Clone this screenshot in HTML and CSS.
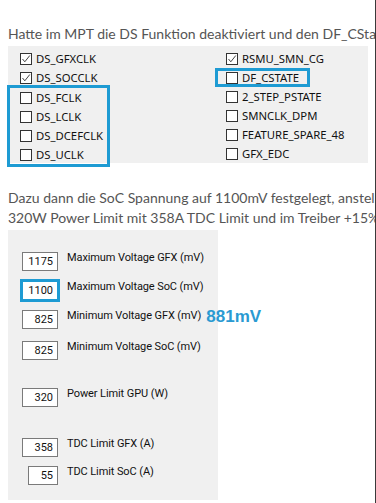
FILE: index.html
```html
<!DOCTYPE html>
<html lang="de">
<head>
  <meta charset="UTF-8" />
  <meta name="viewport" content="width=device-width, initial-scale=1.0"/>
  <title>MPT Einstellungen</title>
  <link rel="stylesheet" href="styles.css">
</head>
<body>
  <div class="page">
    <p class="text first">Hatte im MPT die DS Funktion deaktiviert und den DF_CState</p>

    <div class="panel flags">
      <div class="col">
        <label class="flag"><span class="cb on"><svg viewBox="0 0 10 10"><polyline points="1.5,5 3.8,7.8 8.8,1.5"/></svg></span>DS_GFXCLK</label>
        <label class="flag"><span class="cb on"><svg viewBox="0 0 10 10"><polyline points="1.5,5 3.8,7.8 8.8,1.5"/></svg></span>DS_SOCCLK</label>
        <div class="mark mark-left">
          <label class="flag"><span class="cb"></span>DS_FCLK</label>
          <label class="flag"><span class="cb"></span>DS_LCLK</label>
          <label class="flag"><span class="cb"></span>DS_DCEFCLK</label>
          <label class="flag"><span class="cb"></span>DS_UCLK</label>
        </div>
      </div>
      <div class="col">
        <label class="flag"><span class="cb on"><svg viewBox="0 0 10 10"><polyline points="1.5,5 3.8,7.8 8.8,1.5"/></svg></span>RSMU_SMN_CG</label>
        <div class="mark mark-right">
          <label class="flag"><span class="cb"></span>DF_CSTATE</label>
        </div>
        <label class="flag"><span class="cb"></span>2_STEP_PSTATE</label>
        <label class="flag"><span class="cb"></span>SMNCLK_DPM</label>
        <label class="flag"><span class="cb"></span>FEATURE_SPARE_48</label>
        <label class="flag"><span class="cb"></span>GFX_EDC</label>
      </div>
    </div>

    <p class="text second">Dazu dann die SoC Spannung auf 1100mV festgelegt, anstelle<br>320W Power Limit mit 358A TDC Limit und im Treiber +15%</p>

    <div class="panel limits">
      <div class="row"><span class="box">1175</span><span class="label">Maximum Voltage GFX (mV)</span></div>
      <div class="row r2"><span class="box marked">1100</span><span class="label">Maximum Voltage SoC (mV)</span></div>
      <div class="row r3"><span class="box">825</span><span class="label">Minimum Voltage GFX (mV)</span><span class="note">881mV</span></div>
      <div class="row r4"><span class="box">825</span><span class="label">Minimum Voltage SoC (mV)</span></div>
      <div class="row r5"><span class="box">320</span><span class="label">Power Limit GPU (W)</span></div>
      <div class="row r6"><span class="box">358</span><span class="label">TDC Limit GFX (A)</span></div>
      <div class="row r7"><span class="box small">55</span><span class="label">TDC Limit SoC (A)</span></div>
    </div>
  </div>
</body>
</html>
```

FILE: styles.css
```css
body {
  margin: 0;
  background: #fff;
}
.page {
  width: 375px;
  height: 503px;
  border-right: 1px solid #3a3a3a;
  overflow: hidden;
}
.text {
  font-family: Lato, "Liberation Sans", sans-serif;
  font-size: 14px;
  line-height: 20px;
  color: #555;
  margin: 0 0 0 8px;
  white-space: nowrap;
}
.first {
  padding-top: 24px;
  height: 22px;
}
.second {
  margin-top: 25px;
  height: 42px;
}
.panel {
  background: #f0f0f0;
  margin-left: 8px;
  font-family: "Noto Sans", "Liberation Sans", sans-serif;
  font-size: 11.3px;
  color: #111;
}
.flags {
  width: 348px;
  padding: 3px 0 0 12px;
  display: grid;
  grid-template-columns: 206px 1fr;
}
.col {
  display: flex;
  flex-direction: column;
}
.flag {
  display: flex;
  align-items: center;
  gap: 4px;
  height: 19px;
}
.cb {
  width: 10px;
  height: 10px;
  border: 1px solid #333;
  background: #fff;
  display: flex;
  flex-shrink: 0;
}
.cb svg {
  width: 10px;
  height: 10px;
  fill: none;
  stroke: #444;
  stroke-width: 1;
}
.mark {
  border: 3px solid #1e9bd3;
  box-sizing: border-box;
}
.mark-left {
  width: 103px;
  margin: -2px 0 -4px -13px;
  padding-left: 10px;
}
.mark-right {
  width: 95px;
  height: 19px;
  margin-left: -11px;
  padding-left: 8px;
  display: flex;
  align-items: center;
}
.mark-right .flag {
  height: 13px;
}
.limits {
  width: 196px;
  height: 248px;
  padding: 22px 0 0 14px;
  display: flex;
  flex-direction: column;
  font-family: Roboto, "Noto Sans", sans-serif;
  font-size: 11px;
}
.row {
  display: flex;
  align-items: flex-start;
  height: 19px;
  white-space: nowrap;
}
.r2, .r3 { margin-top: 10px; }
.r4 { margin-top: 12px; }
.r5 { margin-top: 28px; }
.r6 { margin-top: 31px; }
.r7 { margin-top: 9px; }
.box {
  flex-shrink: 0;
  width: 36px;
  height: 19px;
  box-sizing: border-box;
  border: 1px solid #7a7a7a;
  background: #fff;
  text-align: right;
  padding-right: 4px;
  line-height: 18px;
}
.box.small {
  width: 30px;
  margin-left: 6px;
}
.box.marked {
  outline: 3px solid #1e9bd3;
  outline-offset: -1px;
}
.label {
  flex-shrink: 0;
  margin: -1px 0 0 9px;
  letter-spacing: -0.1px;
}
.note {
  flex-shrink: 0;
  font-family: "Liberation Sans", Arial, sans-serif;
  font-weight: bold;
  font-size: 17px;
  color: #2a9ad2;
  margin: -3px 0 0 5px;
}
```
